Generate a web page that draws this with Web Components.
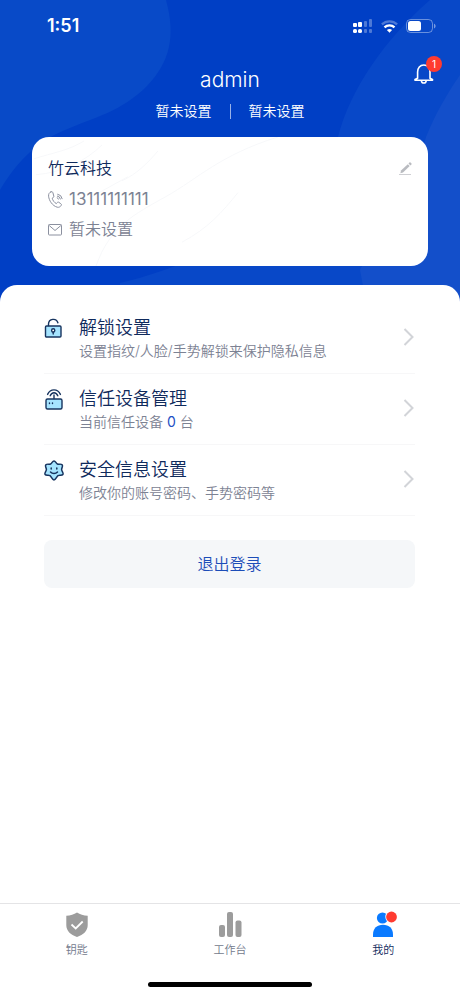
<!DOCTYPE html>
<html lang="zh-CN">
<head>
<meta charset="utf-8">
<meta name="viewport" content="width=device-width, initial-scale=1">
<title>我的</title>
<style>
  html, body { height: 100%; }
  body {
    margin: 0;
    background: #fff;
    color: #0f2a5c;
    font-family: Inter, "Noto Sans CJK SC", sans-serif;
    font-weight: 350;
  }
</style>
</head>
<body>
<profile-app></profile-app>
<script>
const define = (name, html) => customElements.define(name, class extends HTMLElement {
  constructor() {
    super();
    const t = document.createElement('template');
    t.innerHTML = html;
    this.attachShadow({ mode: 'open' }).append(t.content.cloneNode(true));
  }
});

define('status-bar', `
<style>
  :host { display: flex; align-items: center; justify-content: space-between; height: 52px; padding: 0 24px 0 47px; color: #fff; }
  time { font-size: 18px; line-height: 24px; font-weight: 600; }
  .icons { display: flex; align-items: center; gap: 8px; }
  svg { display: block; }
</style>
<time>1:51</time>
<div class="icons">
  <svg width="20" height="14" viewBox="0 0 20 14" fill="#fff" aria-hidden="true">
    <rect x="0" y="4" width="4" height="4" rx="1"/><rect x="5" y="3" width="4" height="5" rx="1"/>
    <g opacity=".3"><rect x="11" y="2" width="3" height="6" rx="1"/><rect x="16" y="0" width="3" height="8" rx="1"/><rect x="11" y="10" width="3" height="4" rx="1"/><rect x="16" y="10" width="3" height="4" rx="1"/></g>
    <rect x="0" y="10" width="4" height="4" rx="1.6"/><rect x="5" y="10" width="4" height="4" rx="1.6"/>
  </svg>
  <svg width="17" height="13" viewBox="0 0 17 13" fill="none" stroke="#fff" stroke-width="2.3" aria-hidden="true">
    <path d="M.9 4.400a11 11 0 0 1 15.200 0" opacity=".3"/>
    <path d="M3.500 7.400a7.200 7.200 0 0 1 10 0"/>
    <path d="M8.500 12.800 5.900 10.100a3.800 3.800 0 0 1 5.200 0z" fill="#fff" stroke="none"/>
  </svg>
  <svg width="30" height="14" viewBox="0 0 30 14" aria-hidden="true">
    <rect x=".5" y=".5" width="26" height="13" rx="4" fill="none" stroke="#fff" stroke-opacity=".4"/>
    <rect x="2" y="2" width="13" height="10" rx="2.5" fill="#fff"/>
    <path d="M28 4.800v4.600c1-.4 1.600-1.200 1.600-2.300S29 5.200 28 4.800z" fill="#fff" opacity=".45"/>
  </svg>
</div>`);

define('notice-button', `
<style>
  :host { display: block; position: relative; width: 20px; height: 20px; }
  button { display: block; width: 20px; height: 20px; padding: 0; border: 0; background: none; cursor: pointer; }
  svg { display: block; }
  .badge { position: absolute; left: 12px; top: -8px; width: 16px; height: 16px; border-radius: 50%; background: #ff3b30; color: #fff; font-size: 10px; line-height: 16px; font-weight: 400; text-align: center; pointer-events: none; }
</style>
<button type="button" aria-label="通知">
  <svg width="20" height="20" viewBox="0 0 20 20" fill="none" stroke="#fff" stroke-width="1.600" stroke-linejoin="round" stroke-linecap="round">
    <path d="M3.600 14.200V8C3.600 3.800 6 1 9.800 1S16 3.800 16 8v6.200l2.500 1.200v.8H1v-.8z"/>
    <path d="M7.400 16.800c.2 1.400 1.100 2.200 2.400 2.200s2.200-.8 2.400-2.200"/>
  </svg>
</button>
<span class="badge">1</span>`);

define('user-header', `
<style>
  :host { display: grid; grid-template-columns: 1fr auto 1fr; padding: 0 26px; color: #fff; }
  .who { grid-column: 2; padding-top: 14px; text-align: center; }
  h1 { margin: 0; font-size: 21px; line-height: 28px; font-weight: 300; }
  p { display: flex; align-items: center; justify-content: center; gap: 18px; margin: 6px 0 0; font-size: 14px; line-height: 22px; }
  i { width: 1px; height: 15px; background: #fff; opacity: .6; }
  notice-button { justify-self: end; margin-top: 12px; }
</style>
<div class="who">
  <h1><slot name="name"></slot></h1>
  <p><slot name="post"></slot><i></i><slot name="dept"></slot></p>
</div>
<notice-button></notice-button>`);

define('contact-card', `
<style>
  :host { display: block; position: relative; isolation: isolate; overflow: hidden; margin: 15px 32px 0; padding: 16px 16px 21px; border-radius: 17px; background: #fff; font-size: 16px; }
  .lines { position: absolute; inset: 0; z-index: -1; width: 100%; height: 100%; }
  header { display: flex; justify-content: space-between; align-items: center; }
  h2 { margin: 0; font-size: 16px; line-height: 31px; font-weight: 350; }
  button { display: block; padding: 0; border: 0; background: none; cursor: pointer; }
  ul { margin: 0; padding: 0; list-style: none; color: #7c8293; }
  li { display: flex; align-items: center; gap: 6px; line-height: 31px; }
  .phone { font-size: 17px; font-weight: 400; line-height: 30px; }
  svg { display: block; }
</style>
<svg class="lines" viewBox="0 0 396 130" preserveAspectRatio="none" fill="none" stroke="#f7f8fa" aria-hidden="true">
  <path d="M2 22C20 16 36 14 52 4M4 38c26-2 50-14 66-30M64 130c14-40 38-52 70-70s54-42 112-60M90 44c14-6 26-18 36-30M150 106c26-14 40-30 56-50M60 60 96 40"/>
</svg>
<header>
  <h2><slot name="company"></slot></h2>
  <button type="button" aria-label="编辑">
    <svg width="13" height="13" viewBox="0 0 13 13" fill="#b9bbc0"><path d="M1.400 11.200 2 8.600 8.800 2.200l1.900 1.900-6.700 6.400z"/><path d="M9.500 1.500 11 0l1.900 1.900-1.500 1.500z"/><path d="M0 12h12v1H0z" opacity=".7"/></svg>
  </button>
</header>
<ul>
  <li class="phone">
    <svg width="15" height="17" viewBox="0 0 15 17" fill="none" stroke="#8b909f" stroke-width="1" stroke-linecap="round" stroke-linejoin="round" aria-hidden="true">
      <path d="M3 .8C1.200 1.500.4 3 .6 5.200c.4 4.400 3.800 9.600 8.600 11 1.800.4 3.200-.4 4-1.800.4-.8.200-1.300-.4-1.700l-2-1.400c-.6-.4-1.200-.2-1.600.3l-.8 1c-2-.8-3.800-3.400-4.200-5.400l1-.6c.6-.4.800-.8.600-1.500L4.900 1.700C4.700.9 4 .5 3 .8z"/>
      <path d="M9.200 6.800a1.600 1.600 0 0 1 1.300 1.300M9.400 5a3.600 3.600 0 0 1 3 3M9.700 3.200a5.400 5.400 0 0 1 4.500 4.500"/>
    </svg>
    <slot name="phone"></slot>
  </li>
  <li>
    <svg width="15" height="12" viewBox="0 0 15 12" fill="none" stroke="#8b909f" stroke-linejoin="round" aria-hidden="true"><rect x=".5" y=".5" width="13" height="10.500" rx=".8"/><path d="m1.200 1.500 5.800 5 5.900-5"/></svg>
    <slot name="mail"></slot>
  </li>
</ul>`);

define('setting-row', `
<style>
  :host { display: block; border-bottom: 1px solid #f7f7f8; }
  a { display: grid; grid-template-columns: 20px 1fr 12px; column-gap: 15px; align-items: start; padding: 11px 0 13px; color: inherit; text-decoration: none; }
  .icon { padding-top: 4px; }
  h3 { margin: 0; font-size: 18px; line-height: 28px; font-weight: 350; }
  p { margin: 0; font-size: 14px; line-height: 18px; color: #7c8293; }
  .arrow { align-self: center; display: block; justify-self: end; }
  ::slotted(svg) { display: block; }
</style>
<a href="#">
  <span class="icon"><slot name="icon"></slot></span>
  <div><h3><slot name="title"></slot></h3><p><slot></slot></p></div>
  <svg class="arrow" width="12" height="18" viewBox="0 0 12 18" fill="none" stroke="#d2d4d8" stroke-width="2" aria-hidden="true"><path d="m1.500 1 8 8-8 8"/></svg>
</a>`);

define('tab-item', `
<style>
  :host { flex: 1; display: block; color: #737a8c; }
  :host([active]) { color: #0f2a5c; }
  a { display: flex; flex-direction: column; align-items: center; gap: 3px; color: inherit; text-decoration: none; font-size: 11px; line-height: 16px; }
  ::slotted(svg) { display: block; }
</style>
<a href="#"><slot name="icon"></slot><span><slot></slot></span></a>`);

define('tab-bar', `
<style>
  :host { display: block; border-top: 1px solid #e4e4e6; background: #fff; }
  nav { display: flex; padding: 7px 0 0; }
  .home { width: 164px; height: 5px; margin: 24px auto 9px; border-radius: 3px; background: #000; }
</style>
<nav><slot></slot></nav>
<div class="home"></div>`);

define('profile-app', `
<style>
  :host { display: flex; flex-direction: column; min-height: 100%; }
  .hero { position: relative; isolation: isolate; padding-bottom: 36px; background: #003fc5; }
  .art { position: absolute; inset: 0; z-index: -1; width: 100%; height: 100%; }
  main { position: relative; flex: 1; margin-top: -17px; padding: 18px 45px 24px 44px; border-radius: 17px 17px 0 0; background: #fff; }
  .logout { display: block; width: 100%; margin-top: 24px; padding: 0; border: 0; border-radius: 8px; background: #f5f7f9; color: #1c4db8; font: inherit; font-size: 16px; line-height: 48px; cursor: pointer; }
  b { font-weight: 400; color: #1c4fc4; }
</style>
<div class="hero">
  <svg class="art" viewBox="0 0 460 302" preserveAspectRatio="none" aria-hidden="true">
    <path d="M0 0h166c10 36 4 62-19 86-26 26-52 31-82 44C38 141 18 160 0 190z" fill="#084ac8"/>
    <path d="M430 0c-46 40-80 90-92 137-14 56-110 120-218 146v19h340V0z" fill="#0848c8"/>
    <path d="M460 75c-14 20-26 42-34 62-10 40-40 80-66 133l6 32h94z" fill="#134fca"/>
  </svg>
  <status-bar></status-bar>
  <user-header>
    <span slot="name">admin</span><span slot="post">暂未设置</span><span slot="dept">暂未设置</span>
  </user-header>
  <contact-card>
    <span slot="company">竹云科技</span><span slot="phone">13111111111</span><span slot="mail">暂未设置</span>
  </contact-card>
</div>
<main>
  <setting-row>
    <svg slot="icon" width="18" height="20" viewBox="0 0 18 20" fill="none" stroke="#17345f" stroke-width="1.400" stroke-linecap="round" aria-hidden="true"><rect x="1.500" y="8" width="15.500" height="11" rx="1" fill="#a5e4ff"/><path d="M4.500 7.500V6a4.800 4.800 0 0 1 9.400-1.200"/><circle cx="9.200" cy="12.400" r="1.600" fill="#fff"/><path d="M9.200 14.200v1.900"/></svg>
    <span slot="title">解锁设置</span>设置指纹/人脸/手势解锁来保护隐私信息
  </setting-row>
  <setting-row>
    <svg slot="icon" width="19" height="21" viewBox="0 0 19 21" fill="none" stroke="#17345f" stroke-width="1.400" stroke-linecap="round" aria-hidden="true"><rect x="2" y="10" width="16" height="10" rx="1.500" fill="#a5e4ff"/><path d="M10 9.500V6M3.600 5.400C5 2.400 7.300.9 10 .9s5 1.500 6.400 4.500M6.200 6.800C7 4.800 8.400 3.700 10 3.700s3 1.100 3.800 3.100M5.500 14v.6M8.500 14v.6"/></svg>
    <span slot="title">信任设备管理</span>当前信任设备 <b>0</b> 台
  </setting-row>
  <setting-row>
    <svg slot="icon" width="20" height="21" viewBox="0 0 20 21" fill="none" stroke="#17345f" stroke-width="1.500" stroke-linecap="round" stroke-linejoin="round" aria-hidden="true"><path d="M10 .9c1.500 0 2 2.500 3.400 3.100 1.400.6 3.500-.5 4.700.7 1.200 1.300-.5 3.200-.5 4.800s2.300 3.600 1.300 5c-1 1.500-3.500.2-4.900 1.100-1.300.9-2.100 4.300-4 4.300s-2.700-3.400-4-4.300c-1.400-.9-3.900.4-4.900-1.100-1-1.400 1.300-3.400 1.300-5S.700 6 1.900 4.700c1.200-1.200 3.300-.1 4.700-.7C8 3.400 8.500.9 10 .9z" fill="#a5e4ff"/><path d="M7.200 8v1M12.800 8v1M6.500 12c1.800 2 5.200 2 7 0"/></svg>
    <span slot="title">安全信息设置</span>修改你的账号密码、手势密码等
  </setting-row>
  <button class="logout" type="button">退出登录</button>
</main>
<tab-bar>
  <tab-item>
    <svg slot="icon" width="24" height="28" viewBox="0 0 24 28" aria-hidden="true"><path d="M12 1.500c3 2 6.500 3 10.700 3.200v9.600c0 5.500-4.200 9.600-10.700 11.700C5.500 23.900 1.300 19.800 1.300 14.300V4.700C5.500 4.500 9 3.500 12 1.500z" fill="#9c9c9c"/><path d="m6.500 13.500 4.200 4 7-7" fill="none" stroke="#fff" stroke-width="1.800"/></svg>钥匙
  </tab-item>
  <tab-item>
    <svg slot="icon" width="24" height="28" viewBox="0 0 24 28" fill="#9c9c9c" aria-hidden="true"><rect x="1" y="14" width="6" height="12" rx="2"/><rect x="9" y="1" width="6" height="25" rx="2"/><rect x="17.500" y="9.500" width="6" height="16.500" rx="2"/></svg>工作台
  </tab-item>
  <tab-item active>
    <svg slot="icon" width="28" height="28" viewBox="0 0 28 28" aria-hidden="true"><circle cx="13.500" cy="7" r="5.600" fill="#0a7aff"/><path d="M4 26v-2.500c0-6 4-9.700 10-9.700s10 3.700 10 9.700V26z" fill="#0a7aff"/><circle cx="22.500" cy="6" r="6.200" fill="#fff"/><circle cx="22.500" cy="6" r="5.400" fill="#ff3b30"/></svg>我的
  </tab-item>
</tab-bar>`);
</script>
</body>
</html>
